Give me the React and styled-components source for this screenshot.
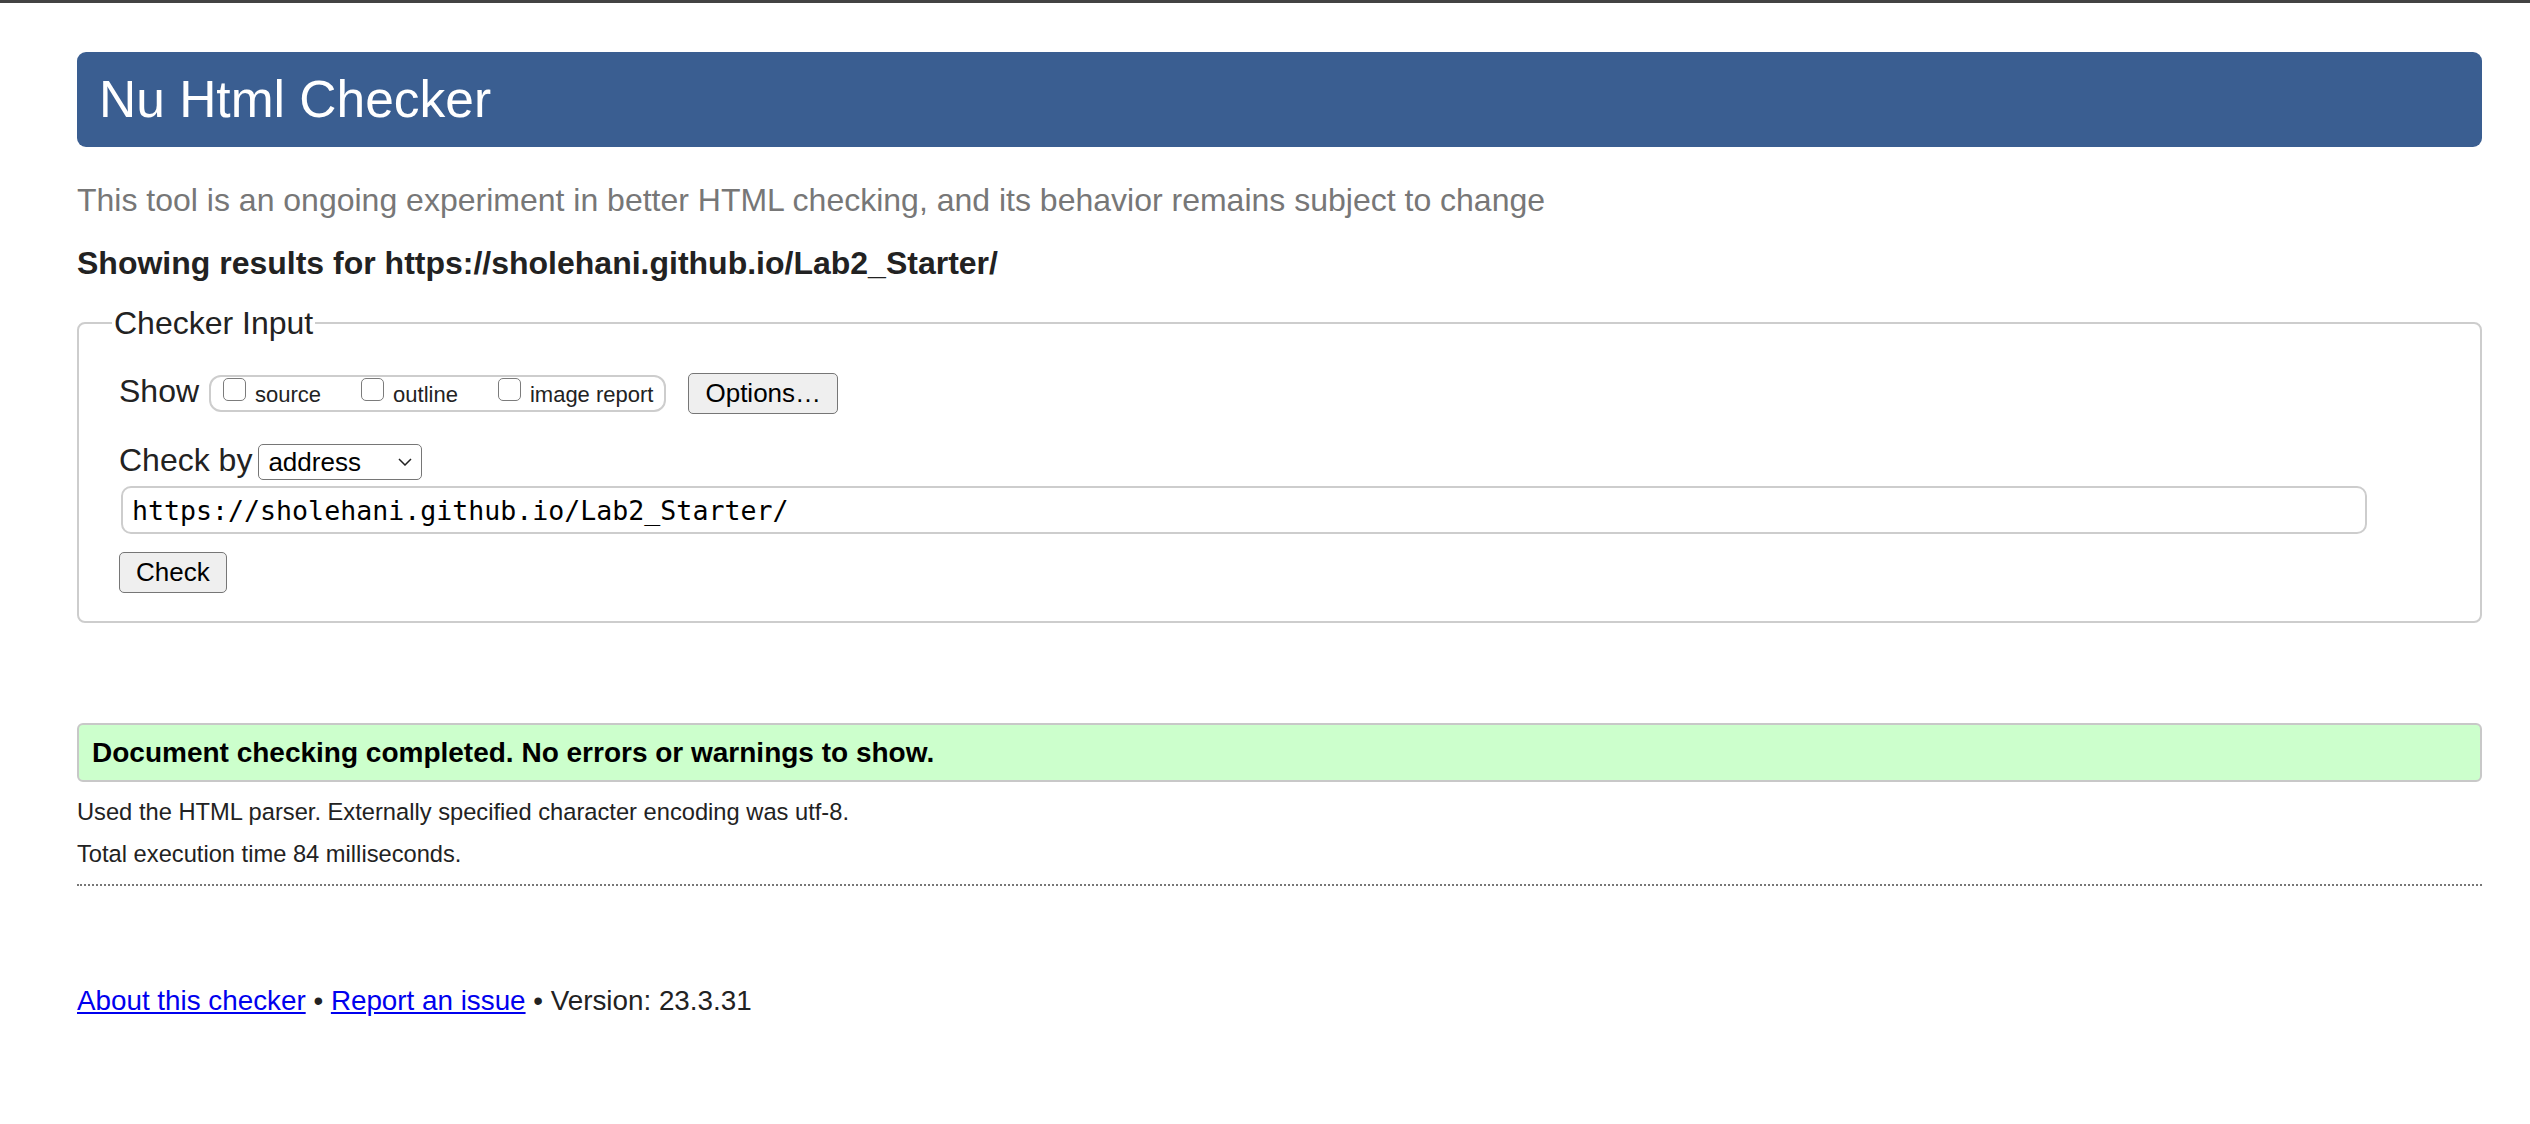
import React from 'react';
import styled, { createGlobalStyle } from 'styled-components';

const GlobalStyle = createGlobalStyle`
  body {
    margin: 0;
    background: #fff;
    color: #222;
    font-family: "Liberation Sans", Arial, sans-serif;
  }
`;

const TopBar = styled.div`
  height: 3px;
  background: #434343;
`;

const Page = styled.div`
  padding: 49px 48px 40px 77px;
`;

const Header = styled.h1`
  margin: 0;
  height: 95px;
  display: flex;
  align-items: center;
  padding-left: 22px;
  background: #3a5e91;
  border-radius: 9px;
  color: #fff;
  font-size: 51.5px;
  font-weight: normal;
  line-height: 95px;
`;

const Tagline = styled.p`
  margin: 33px 0 0;
  font-size: 32px;
  line-height: 40px;
  color: #777;
`;

const Showing = styled.p`
  margin: 23px 0 0;
  font-size: 32px;
  line-height: 40px;
  font-weight: bold;
  color: #222;
`;

const Fieldset = styled.fieldset`
  margin: 20px 0 0;
  padding: 28px 40px 28px 40px;
  border: 2px solid #cdcdcd;
  border-radius: 8px;
`;

const Legend = styled.legend`
  margin-left: -7px;
  padding: 0 2px;
  font-size: 32px;
  line-height: 40px;
  color: #222;
`;

const Row = styled.div`
  display: flex;
  align-items: flex-start;
  margin-top: ${props => props.top || 0}px;
`;

const Label = styled.span`
  font-size: 32px;
  line-height: 40px;
  color: #222;
  margin-right: ${props => props.gap || 0}px;
`;

const OptionGroup = styled.div`
  box-sizing: border-box;
  height: 37px;
  margin-top: 4px;
  display: flex;
  align-items: flex-start;
  gap: 40px;
  padding: 0 11px 0 12px;
  border: 2px solid #cdcdcd;
  border-radius: 12px;
`;

const CheckLabel = styled.label`
  display: flex;
  align-items: flex-start;
  gap: 9px;
  font-size: 22px;
  line-height: 26px;
  color: #222;

  span {
    margin-top: 5px;
  }
`;

const Checkbox = styled.input.attrs({ type: 'checkbox' })`
  appearance: none;
  margin: 1px 0 0;
  width: 23px;
  height: 23px;
  border: 1.5px solid #7c7c7c;
  border-radius: 5px;
  background: #fff;
`;

const Button = styled.button`
  box-sizing: border-box;
  height: 41px;
  margin: ${props => props.margin || '0'};
  padding: 0 16px;
  background: #efefef;
  border: 1.5px solid #767676;
  border-radius: 5px;
  font-family: "Liberation Sans", Arial, sans-serif;
  font-size: 26px;
  color: #000;
`;

const Select = styled.div`
  box-sizing: border-box;
  width: 164px;
  height: 36px;
  margin-top: 4px;
  display: flex;
  align-items: center;
  justify-content: space-between;
  padding: 0 9px 0 9px;
  border: 1.5px solid #767676;
  border-radius: 5px;
  background: #fff;
  font-size: 26px;
  color: #000;
`;

const UrlInput = styled.input`
  box-sizing: border-box;
  display: block;
  width: 2246px;
  height: 48px;
  margin: 6px 0 0 2px;
  padding: 0 9px;
  border: 2px solid #cdcdcd;
  border-radius: 10px;
  font-family: "DejaVu Sans Mono", "Liberation Mono", monospace;
  font-size: 26.6px;
  color: #000;
  outline: none;
`;

const Success = styled.div`
  box-sizing: border-box;
  height: 59px;
  margin-top: 100px;
  display: flex;
  align-items: center;
  padding: 0 13px;
  background: #ccffcc;
  border: 2px solid #c8c8c8;
  border-radius: 6px;
  font-size: 28px;
  font-weight: bold;
  color: #000;
`;

const Info = styled.p`
  margin: ${props => props.first ? '9px' : '0'} 0 0;
  font-size: 23.7px;
  line-height: 42px;
  color: #222;
`;

const Rule = styled.hr`
  margin: 9px 0 0;
  border: 0;
  border-top: 2px dotted #777;
`;

const Footer = styled.p`
  margin: 95px 0 0;
  font-size: 27.8px;
  line-height: 40px;
  color: #222;

  a {
    color: #0000ee;
    text-decoration: underline;
  }
`;

const Chevron = () => (
  <svg width="14" height="8" viewBox="0 0 14 8">
    <polyline points="1,1 7,7 13,1" fill="none" stroke="#222" strokeWidth="1.5" />
  </svg>
);

export default function App() {
  return (
    <>
      <GlobalStyle />
      <TopBar />
      <Page>
        <Header>Nu Html Checker</Header>
        <Tagline>This tool is an ongoing experiment in better HTML checking, and its behavior remains subject to change</Tagline>
        <Showing>Showing results for https://sholehani.github.io/Lab2_Starter/</Showing>
        <Fieldset>
          <Legend>Checker Input</Legend>
          <Row>
            <Label gap={10}>Show</Label>
            <OptionGroup>
              <CheckLabel><Checkbox /><span>source</span></CheckLabel>
              <CheckLabel><Checkbox /><span>outline</span></CheckLabel>
              <CheckLabel><Checkbox /><span>image report</span></CheckLabel>
            </OptionGroup>
            <Button margin="2px 0 0 22px">Options…</Button>
          </Row>
          <Row top={26}>
            <Label gap={6}>Check by</Label>
            <Select>
              <span>address</span>
              <Chevron />
            </Select>
          </Row>
          <UrlInput readOnly value="https://sholehani.github.io/Lab2_Starter/" />
          <Button margin="18px 0 0 0">Check</Button>
        </Fieldset>
        <Success>Document checking completed. No errors or warnings to show.</Success>
        <Info first>Used the HTML parser. Externally specified character encoding was utf-8.</Info>
        <Info>Total execution time 84 milliseconds.</Info>
        <Rule />
        <Footer>
          <a href="#about">About this checker</a> • <a href="#report">Report an issue</a> • Version: 23.3.31
        </Footer>
      </Page>
    </>
  );
}
